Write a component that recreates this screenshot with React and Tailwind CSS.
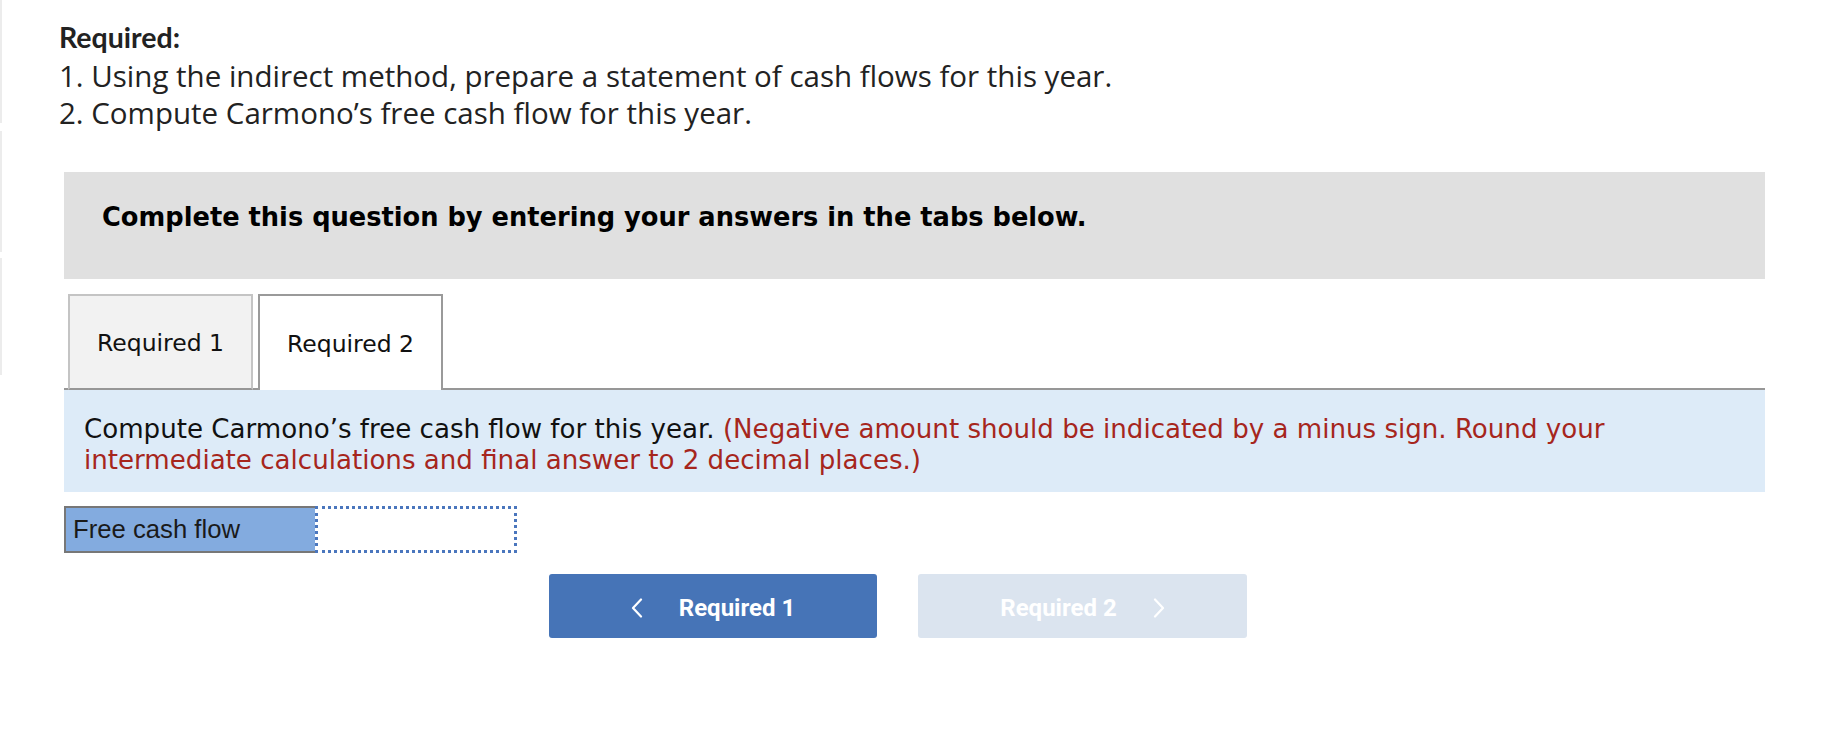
const proxima = { fontFamily: '"Open Sans", "Lato", sans-serif' };
const verdana = { fontFamily: '"DejaVu Sans", Verdana, sans-serif' };

function Chevron({ dir }) {
  return (
    <svg width="12" height="20" viewBox="0 0 12 20" fill="none" stroke="currentColor" strokeWidth="2.2" strokeLinecap="round" strokeLinejoin="round">
      {dir === "left" ? <polyline points="10,1.5 2,10 10,18.5" /> : <polyline points="2,1.5 10,10 2,18.5" />}
    </svg>
  );
}

export default function App() {
  return (
    <div className="flex min-h-screen bg-white text-[#222]">
      {/* faint frame edge on the left */}
      <div className="flex w-[3px] flex-col">
        <div className="h-[123px] border-l-2 border-[#ececec]" />
        <div className="mt-[8px] h-[121px] border-l-2 border-[#ececec]" />
        <div className="mt-[6px] h-[117px] border-l-2 border-[#ececec]" />
      </div>

      <div className="flex-1 pl-[56px] pt-[19px]">
        <div className="text-[29.5px] leading-[37.5px] text-[#222]" style={proxima}>
          <p className="text-[28.5px] font-bold" style={{ fontFamily: '"Lato", sans-serif' }}>
            Required:
          </p>
          <p>1. Using the indirect method, prepare a statement of cash flows for this year.</p>
          <p>2. Compute Carmono’s free cash flow for this year.</p>
        </div>

        <div className="ml-[5px] mt-[40px] w-[1701px]">
          <div className="h-[107px] bg-[#e0e0e0] pl-[38px] pt-[29px]">
            <p className="text-[25.7px] font-bold leading-[32px] text-black" style={verdana}>
              Complete this question by entering your answers in the tabs below.
            </p>
          </div>

          {/* tabs */}
          <div className="mt-[15px] flex border-b-2 border-[#979797] pl-[4px]" style={verdana}>
            <button className="mb-[-2px] flex h-[96px] w-[185px] items-center justify-center border-2 border-b-2 border-[#c4c4c4] border-b-[#979797] bg-[#f2f2f2] pt-[4px] text-[23.5px] text-[#111]">
              Required 1
            </button>
            <button className="mb-[-2px] ml-[5px] flex h-[96px] w-[185px] items-center justify-center border-2 border-b-0 border-[#9a9a9a] bg-white pt-[4px] text-[23.5px] text-[#111]">
              Required 2
            </button>
          </div>

          <div className="h-[102px] bg-[#ddebf8] px-[20px] pt-[24px] text-[26.1px] leading-[31.5px]" style={verdana}>
            <p className="text-[#111]">
              Compute Carmono’s free cash flow for this year.{" "}
              <span className="text-[#a6261d]">
                (Negative amount should be indicated by a minus sign. Round your
                <br />
                intermediate calculations and final answer to 2 decimal places.)
              </span>
            </p>
          </div>

          {/* answer row */}
          <div className="mt-[14px] flex h-[47px] w-[453px] border-2 border-r-0 border-[#777]">
            <div
              className="flex w-[251px] items-center bg-[#83abdf] pl-[7px] text-[25.7px] text-[#1a1a1a]"
              style={{ fontFamily: '"Liberation Sans", Arial, sans-serif' }}
            >
              Free cash flow
            </div>
            <input
              className="mb-[-2px] mt-[-2px] h-[47px] w-[202px] border-[3px] border-dotted border-[#4a76bd] bg-white outline-none"
              aria-label="Free cash flow"
            />
          </div>

          {/* navigation */}
          <div className="mt-[21px] flex gap-[41px] pl-[485px]" style={{ fontFamily: '"Roboto", sans-serif' }}>
            <button className="flex h-[64px] w-[328px] items-center justify-center gap-[36px] rounded-[3px] bg-[#4674b7] pt-[5px] text-[24px] font-bold text-white">
              <Chevron dir="left" />
              <span>Required 1</span>
            </button>
            <button className="flex h-[64px] w-[329px] items-center justify-center gap-[36px] rounded-[3px] bg-[#dbe4ef] pt-[5px] text-[24px] font-bold text-white">
              <span>Required 2</span>
              <Chevron dir="right" />
            </button>
          </div>
        </div>
      </div>
    </div>
  );
}
